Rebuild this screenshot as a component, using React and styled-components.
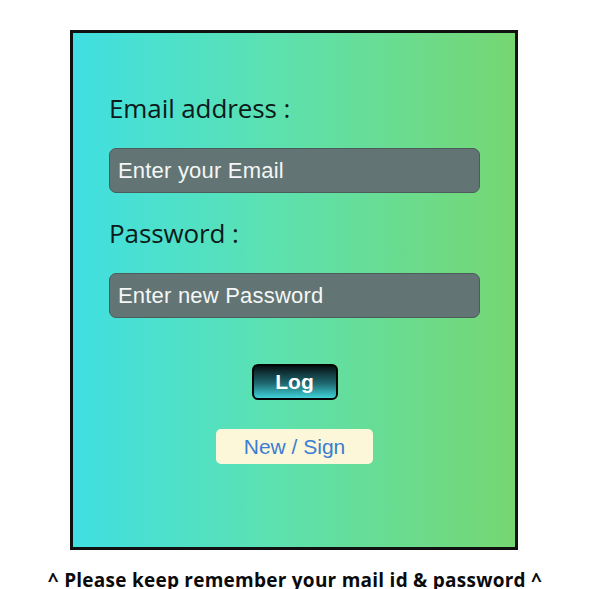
import React from "react";
import styled, { createGlobalStyle } from "styled-components";

const GlobalStyle = createGlobalStyle`
  body {
    margin: 0;
    background: #ffffff;
    font-family: "Open Sans", "DejaVu Sans", sans-serif;
  }
`;

const App = () => {
  return (
    <Page>
      <GlobalStyle />
      <Card>
        <Label>Email address :</Label>
        <Field type="email" placeholder="Enter your Email" />
        <Label $gap={25}>Password :</Label>
        <Field type="password" placeholder="Enter new Password" />
        <LogButton>Log</LogButton>
        <SignButton>New / Sign</SignButton>
      </Card>
      <Note>^ Please keep remember your mail id &amp; password ^</Note>
    </Page>
  );
};

export default App;

const Page = styled.div`
  width: 590px;
  display: flex;
  flex-direction: column;
  padding-top: 30px;
`;

const Card = styled.div`
  margin-left: 70px;
  width: 448px;
  height: 520px;
  box-sizing: border-box;
  border: 3px solid #111;
  background: linear-gradient(90deg, #40dfe2 0%, #5ce1b0 45%, #76d772 100%);
  display: flex;
  flex-direction: column;
  padding: 60px 35px 0 36px;
`;

const Label = styled.div`
  margin-top: ${(p) => p.$gap || 0}px;
  font-size: 26px;
  line-height: 30px;
  color: #0c1a1a;
  letter-spacing: -0.1px;
`;

const Field = styled.input`
  margin-top: 25px;
  width: 371px;
  height: 45px;
  box-sizing: border-box;
  border: 1px solid #4c5c5b;
  border-radius: 7px;
  background: #627574;
  padding: 0 8px;
  font-family: "Liberation Sans", Arial, sans-serif;
  font-size: 22px;
  letter-spacing: 0.2px;
  color: #fff;
  outline: none;

  &::placeholder {
    color: #f4f7f6;
  }
`;

const LogButton = styled.button`
  align-self: center;
  margin-top: 46px;
  width: 86px;
  height: 36px;
  box-sizing: border-box;
  border: 2px solid #050505;
  border-radius: 6px;
  background: linear-gradient(180deg, #061214 0%, #1f6a72 55%, #3fd2d8 100%);
  color: #fff;
  font-family: "Liberation Sans", Arial, sans-serif;
  font-weight: bold;
  font-size: 21px;
  padding: 0;
`;

const SignButton = styled.button`
  align-self: center;
  margin-top: 29px;
  width: 157px;
  height: 35px;
  border: none;
  border-radius: 5px;
  background: #fbf7d8;
  color: #3a7dd3;
  font-family: "Liberation Sans", Arial, sans-serif;
  font-size: 21px;
  padding: 0;
`;

const Note = styled.div`
  margin-top: 19px;
  text-align: center;
  font-size: 19px;
  line-height: 22px;
  font-weight: bold;
  letter-spacing: 0.25px;
  color: #0a0a0a;
`;
